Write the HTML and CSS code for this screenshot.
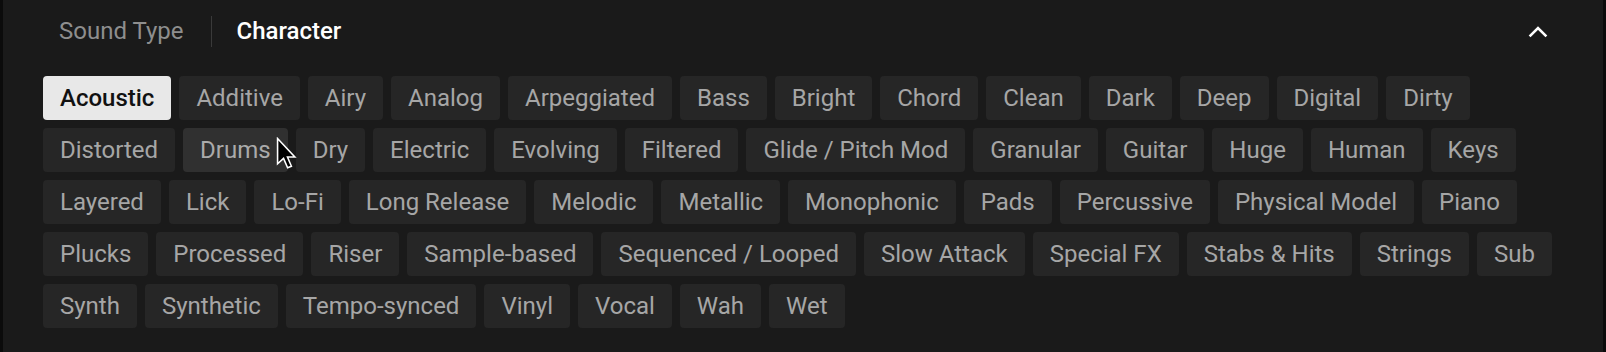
FILE: index.html
```html
<!DOCTYPE html>
<html lang="en">
<head>
<meta charset="utf-8">
<title>Character filter</title>
<link rel="stylesheet" href="styles.css">
</head>
<body>
<div class="frame">
  <div class="panel">
    <div class="header">
      <div class="tabs">
        <span class="tab tab-muted">Sound Type</span>
        <span class="divider"></span>
        <span class="tab tab-active">Character</span>
      </div>
      <button class="collapse" aria-label="Collapse">
        <svg class="chevron" viewBox="0 0 20 12" width="20" height="12"><polyline points="1.6,10.4 10,2 18.4,10.4" fill="none" stroke="#ffffff" stroke-width="2.6" stroke-linecap="butt" stroke-linejoin="miter"/></svg>
      </button>
    </div>
    <div class="chips">
      <span class="chip chip-selected">Acoustic</span>
      <span class="chip">Additive</span>
      <span class="chip">Airy</span>
      <span class="chip">Analog</span>
      <span class="chip">Arpeggiated</span>
      <span class="chip">Bass</span>
      <span class="chip">Bright</span>
      <span class="chip">Chord</span>
      <span class="chip">Clean</span>
      <span class="chip">Dark</span>
      <span class="chip">Deep</span>
      <span class="chip">Digital</span>
      <span class="chip">Dirty</span>
      <span class="chip">Distorted</span>
      <span class="chip chip-hover">Drums</span>
      <span class="chip">Dry</span>
      <span class="chip">Electric</span>
      <span class="chip">Evolving</span>
      <span class="chip">Filtered</span>
      <span class="chip">Glide / Pitch Mod</span>
      <span class="chip">Granular</span>
      <span class="chip">Guitar</span>
      <span class="chip">Huge</span>
      <span class="chip">Human</span>
      <span class="chip">Keys</span>
      <span class="chip">Layered</span>
      <span class="chip">Lick</span>
      <span class="chip">Lo-Fi</span>
      <span class="chip">Long Release</span>
      <span class="chip">Melodic</span>
      <span class="chip">Metallic</span>
      <span class="chip">Monophonic</span>
      <span class="chip">Pads</span>
      <span class="chip">Percussive</span>
      <span class="chip">Physical Model</span>
      <span class="chip">Piano</span>
      <span class="chip">Plucks</span>
      <span class="chip">Processed</span>
      <span class="chip">Riser</span>
      <span class="chip">Sample-based</span>
      <span class="chip">Sequenced / Looped</span>
      <span class="chip">Slow Attack</span>
      <span class="chip">Special FX</span>
      <span class="chip">Stabs &amp; Hits</span>
      <span class="chip">Strings</span>
      <span class="chip">Sub</span>
      <span class="chip">Synth</span>
      <span class="chip">Synthetic</span>
      <span class="chip">Tempo-synced</span>
      <span class="chip">Vinyl</span>
      <span class="chip">Vocal</span>
      <span class="chip">Wah</span>
      <span class="chip">Wet</span>
    </div>
  </div>
  <svg class="cursor" viewBox="0 0 14 21" width="22" height="33"><path d="M1 1 L1 17 L4.8 13.6 L7.4 19.6 L9.8 18.6 L7.3 12.7 L12 12.7 Z" fill="#000000" stroke="#ffffff" stroke-width="1" stroke-linejoin="miter"/></svg>
</div>
</body>
</html>
```

FILE: styles.css
```css
html, body {
  margin: 0;
  padding: 0;
  background: #0b0b0b;
}

body {
  font-family: Roboto, "Noto Sans", "Liberation Sans", sans-serif;
}

.frame {
  position: relative;
  box-sizing: border-box;
  min-height: 100vh;
  margin: 0 3px;
  background: #1a1a1a;
}

.panel {
  padding: 16px 40px 0 40px;
}

.header {
  display: flex;
  align-items: center;
  justify-content: space-between;
  height: 31px;
}

.tabs {
  display: flex;
  align-items: center;
  height: 31px;
}

.tab {
  font-size: 24px;
  line-height: 31px;
  padding: 0 16px;
}

.tab-muted {
  color: #8e8e8e;
}

.tab-active {
  color: #ffffff;
  font-weight: 500;
}

.divider {
  width: 1px;
  height: 31px;
  background: #3a3a3a;
  margin: 0 8px 0 12px;
}

.collapse {
  background: none;
  border: 0;
  padding: 0;
  margin: 0 15px 0 0;
  display: flex;
  align-items: center;
  height: 31px;
}

.chevron {
  display: block;
}

.chips {
  display: flex;
  flex-wrap: wrap;
  gap: 8px;
  margin-top: 29px;
}

.chip {
  display: block;
  height: 44px;
  line-height: 44px;
  padding: 0 17px;
  font-size: 24px;
  color: #a6a6a6;
  background: #262626;
  border-radius: 4px;
  white-space: nowrap;
}

.chip-hover {
  background: #303030;
  color: #aaaaaa;
}

.chip-selected {
  background: #e8e8e8;
  color: #111111;
  font-weight: 500;
}

.cursor {
  position: absolute;
  left: 273px;
  top: 137px;
}
```
